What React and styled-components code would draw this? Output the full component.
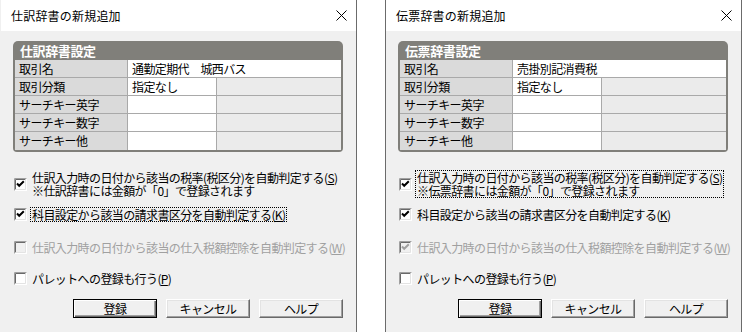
import React from 'react';
import styled, { createGlobalStyle } from 'styled-components';

const GlobalStyle = createGlobalStyle`
    html, body {
        margin: 0;
        background: #ffffff;
    }
    body {
        font-family: "Noto Sans CJK JP", "Noto Sans", sans-serif;
        font-size: 12px;
        color: #000000;
    }
`;

function CheckBox({ checked, disabled }) {
    const mark = disabled ? '#a0a0a0' : '#000000';
    return (
        <Box viewBox='0 0 13 13' width='13' height='13'>
            <rect x='0' y='0' width='13' height='13' fill='#ffffff' />
            <path d='M0.5 12.5 V0.5 H12.5' stroke='#a0a0a0' fill='none' />
            <path d='M1.5 11.5 V1.5 H11.5' stroke='#696969' fill='none' />
            <path d='M1.5 11.5 H11.5 V1.5' stroke='#e3e3e3' fill='none' />
            <rect x='2' y='2' width='9' height='9' fill={disabled ? '#f0f0f0' : '#ffffff'} />
            {checked && <path d='M3 5.5 L5.2 7.8 L9.8 3.2' stroke={mark} strokeWidth='2' fill='none' />}
        </Box>
    );
}

function Dialog({ first, kind, name, focus, thirdChecked }) {
    // 左右で違うのは名前・注記・フォーカス位置だけ
    return (
        <Window $first={first}>
            <TitleBar>
                <span>{kind}辞書の新規追加</span>
                <svg width='11' height='11' viewBox='0 0 11 11'>
                    <path d='M0.5 0.5 L10.5 10.5 M10.5 0.5 L0.5 10.5' stroke='#000' strokeWidth='1' />
                </svg>
            </TitleBar>
            <Body>
                <Group>
                    <GroupTitle>{kind}辞書設定</GroupTitle>
                    <Row>
                        <Label>取引名</Label>
                        <Value $wide>{name}</Value>
                    </Row>
                    <Row>
                        <Label>取引分類</Label>
                        <Value>指定なし</Value>
                        <Spare />
                    </Row>
                    <Row>
                        <Label>サーチキー英字</Label>
                        <Value />
                        <Spare />
                    </Row>
                    <Row>
                        <Label>サーチキー数字</Label>
                        <Value />
                        <Spare />
                    </Row>
                    <Row $last>
                        <Label>サーチキー他</Label>
                        <Value />
                        <Spare />
                    </Row>
                </Group>

                <Option $mt={18} $h={28}>
                    <CheckBox checked />
                    <Caption $focus={focus === 1}>
                        <Line>仕訳入力時の日付から該当の税率(税区分)を自動判定する(<u>S</u>)</Line>
                        <Line>※{kind}辞書には金額が「0」で登録されます</Line>
                    </Caption>
                </Option>
                <Option $mt={9} $h={14}>
                    <CheckBox checked />
                    <Caption $focus={focus === 2}>
                        <Line>科目設定から該当の請求書区分を自動判定する(<u>K</u>)</Line>
                    </Caption>
                </Option>
                <Option $mt={19} $h={14}>
                    <CheckBox checked={thirdChecked} disabled />
                    <Caption $disabled>
                        <Line>仕訳入力時の日付から該当の仕入税額控除を自動判定する(<u>W</u>)</Line>
                    </Caption>
                </Option>
                <Option $mt={17} $h={14}>
                    <CheckBox />
                    <Caption>
                        <Line>パレットへの登録も行う(<u>P</u>)</Line>
                    </Caption>
                </Option>

                <Buttons>
                    <Button $default>登録</Button>
                    <Button>キャンセル</Button>
                    <Button>ヘルプ</Button>
                </Buttons>
            </Body>
        </Window>
    );
}

function App() {
    return (
        <>
            <GlobalStyle />
            <Page>
                <Dialog first kind='仕訳' name='通勤定期代　城西バス' focus={2} thirdChecked={false} />
                <Dialog kind='伝票' name='売掛別記消費税' focus={1} thirdChecked />
            </Page>
        </>
    );
}

const Page = styled.div`
    display: flex;
    gap: 28px;
    width: 742px;
    height: 332px;
    overflow: hidden;
`;

const Window = styled.div`
    flex: none;
    width: 357px;
    height: 332px;
    box-sizing: border-box;
    display: flex;
    flex-direction: column;
    background: #f0f0f0;
    border-left: 1px solid ${(p) => (p.$first ? '#f0f0f0' : '#6b6b6b')};
    border-right: 1px solid #6b6b6b;
`;

const TitleBar = styled.div`
    height: 31px;
    flex: none;
    background: #ffffff;
    display: flex;
    align-items: center;
    justify-content: space-between;
    padding: 0 9px 0 10px;
    font-size: 12px;
    letter-spacing: 0.2px;
`;

const Body = styled.div`
    display: flex;
    flex-direction: column;
    padding: 10px 12px 0 12px;
    font-size: 12px;
    letter-spacing: -0.6px;
`;

const Group = styled.div`
    width: 330px;
    box-sizing: border-box;
    background: #807f7a;
    border-radius: 5px 5px 4px 4px;
    padding: 0 2px 2px 2px;
`;

const GroupTitle = styled.div`
    height: 19px;
    line-height: 19px;
    padding-left: 5px;
    color: #ffffff;
    font-weight: bold;
    font-size: 13px;
    letter-spacing: -0.4px;
`;

const Row = styled.div`
    display: grid;
    grid-template-columns: 113px 89px 1fr;
    height: 18px;
    box-sizing: border-box;
    border-bottom: ${(p) => (p.$last ? 'none' : '1px solid #a9a9a9')};
`;

const Label = styled.div`
    background: #dadada;
    border-right: 1px solid #a9a9a9;
    padding-left: 4px;
    line-height: 17px;
`;

const Value = styled.div`
    background: #ffffff;
    grid-column: ${(p) => (p.$wide ? 'span 2' : 'auto')};
    border-right: ${(p) => (p.$wide ? 'none' : '1px solid #a9a9a9')};
    padding-left: 4px;
    line-height: 17px;
`;

const Spare = styled.div`
    background: #ebebeb;
`;

const Option = styled.div`
    display: flex;
    align-items: center;
    gap: 3px;
    height: ${(p) => p.$h}px;
    margin-top: ${(p) => p.$mt}px;
    padding-left: 1px;
`;

const Box = styled.svg`
    flex: none;
    display: block;
`;

const Caption = styled.div`
    display: flex;
    flex-direction: column;
    padding: 0 1px;
    white-space: nowrap;
    color: ${(p) => (p.$disabled ? '#a0a0a0' : '#000000')};
    border: 1px dotted ${(p) => (p.$focus ? '#000000' : 'transparent')};

    u {
        text-underline-offset: 1px;
    }
`;

const Line = styled.span`
    display: block;
    height: 13px;
    line-height: 13px;
`;

const Buttons = styled.div`
    display: flex;
    justify-content: flex-end;
    gap: 9px;
    margin-top: 14px;
    width: 330px;
`;

const Button = styled.button`
    width: 84px;
    height: 19px;
    padding: 0;
    box-sizing: border-box;
    background: #f0f0f0;
    font-family: "Noto Sans CJK JP", "Noto Sans", sans-serif;
    font-size: 12px;
    letter-spacing: -0.6px;
    color: #000000;
    border: 1px solid;
    border-color: ${(p) => (p.$default ? '#000000' : '#ffffff #696969 #696969 #ffffff')};
    box-shadow: ${(p) =>
        p.$default
            ? 'inset 1px 1px #ffffff, inset -1px -1px #696969, inset -2px -2px #a0a0a0'
            : 'inset -1px -1px #a0a0a0, inset 1px 1px #e3e3e3'};
`;

export default App;
